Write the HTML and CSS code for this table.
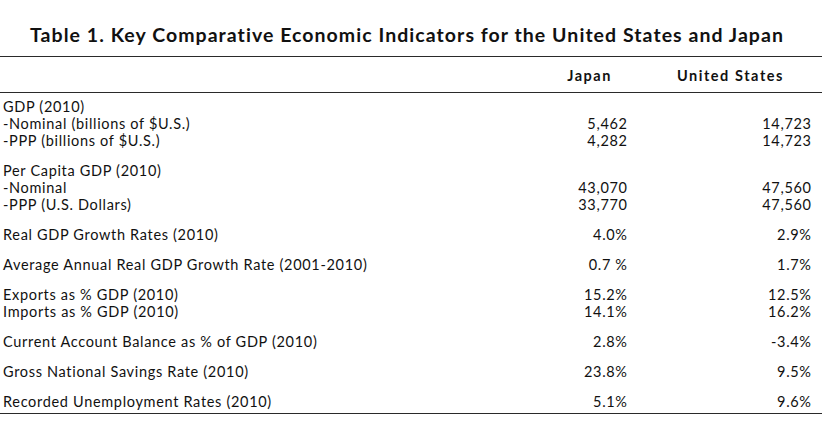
FILE: index.html
```html
<!DOCTYPE html>
<html>
<head>
<meta charset="utf-8">
<link rel="stylesheet" href="styles.css">
</head>
<body>
<div class="page">
  <h1 class="title">Table 1. Key Comparative Economic Indicators for the United States and Japan</h1>
  <div class="table">
    <div class="head">
      <div></div>
      <div class="h-jp">Japan</div>
      <div class="h-us">United States</div>
    </div>
    <div class="body">
      <div class="group">
        <div class="row"><span class="lbl">GDP (2010)</span><span></span><span></span></div>
        <div class="row"><span class="lbl">-Nominal (billions of $U.S.)</span><span class="num">5,462</span><span class="num us">14,723</span></div>
        <div class="row"><span class="lbl">-PPP (billions of $U.S.)</span><span class="num">4,282</span><span class="num us">14,723</span></div>
      </div>
      <div class="group">
        <div class="row"><span class="lbl">Per Capita GDP (2010)</span><span></span><span></span></div>
        <div class="row"><span class="lbl">-Nominal</span><span class="num">43,070</span><span class="num us">47,560</span></div>
        <div class="row"><span class="lbl">-PPP (U.S. Dollars)</span><span class="num">33,770</span><span class="num us">47,560</span></div>
      </div>
      <div class="group">
        <div class="row"><span class="lbl">Real GDP Growth Rates (2010)</span><span class="num">4.0%</span><span class="num us">2.9%</span></div>
      </div>
      <div class="group">
        <div class="row"><span class="lbl">Average Annual Real GDP Growth Rate (2001-2010)</span><span class="num">0.7 %</span><span class="num us">1.7%</span></div>
      </div>
      <div class="group">
        <div class="row"><span class="lbl">Exports as % GDP (2010)</span><span class="num">15.2%</span><span class="num us">12.5%</span></div>
        <div class="row"><span class="lbl">Imports as % GDP (2010)</span><span class="num">14.1%</span><span class="num us">16.2%</span></div>
      </div>
      <div class="group">
        <div class="row"><span class="lbl">Current Account Balance as % of GDP (2010)</span><span class="num">2.8%</span><span class="num us">-3.4%</span></div>
      </div>
      <div class="group">
        <div class="row"><span class="lbl">Gross National Savings Rate (2010)</span><span class="num">23.8%</span><span class="num us">9.5%</span></div>
      </div>
      <div class="group">
        <div class="row"><span class="lbl">Recorded Unemployment Rates (2010)</span><span class="num">5.1%</span><span class="num us">9.6%</span></div>
      </div>
    </div>
  </div>
</div>
</body>
</html>
```
FILE: styles.css
```css
* { box-sizing: border-box; }
html, body { margin: 0; padding: 0; background: #fff; }
body {
  font-family: Lato, "Liberation Sans", sans-serif;
  color: #111;
}
.page {
  width: 822px;
}
.title {
  margin: 0;
  height: 56px;
  padding-top: 24px;
  font-size: 19.5px;
  font-weight: 700;
  line-height: 22px;
  text-align: center;
  padding-right: 8px;
  letter-spacing: 1.05px;
}
.table {
  border-top: 1px solid #2a2a2a;
  border-bottom: 1px solid #2a2a2a;
}
.head {
  display: grid;
  grid-template-columns: 1fr 87px 195px;
  height: 36px;
  align-items: center;
  border-bottom: 1px solid #2a2a2a;
  font-weight: 700;
  font-size: 14.5px;
  letter-spacing: 1.55px;
  padding-top: 1px;
}
.h-jp { justify-self: end; margin-right: 15px; }
.h-us { justify-self: end; margin-right: 38px; }
.body {
  padding: 5px 0 3px 3px;
  font-size: 14.5px;
  line-height: 17px;
  letter-spacing: 0.68px;
}
.group + .group { margin-top: 13px; }
.group-wide { margin-top: 14px; }
.row {
  display: grid;
  grid-template-columns: 1fr 87px 195px;
}
.num { text-align: right; margin-right: -0.68px; }
.num.us { padding-right: 11px; }
```
